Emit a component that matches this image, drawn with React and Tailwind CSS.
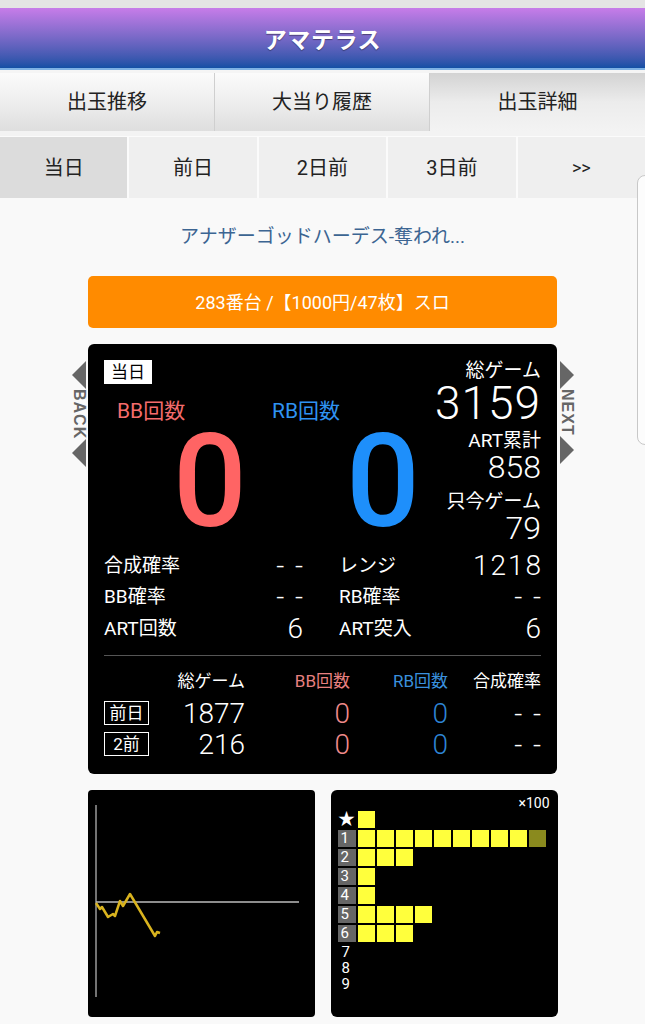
import React from 'react';

const seg = "font-['Roboto','Liberation_Sans',sans-serif]";

const histRows = [
  { label: '1', count: 9, dim: 1 },
  { label: '2', count: 3 },
  { label: '3', count: 1 },
  { label: '4', count: 1 },
  { label: '5', count: 4 },
  { label: '6', count: 3 },
];

const Cell = ({ dim }) => (
  <div className={`w-[17px] h-[17px] ${dim ? 'bg-[#8a8a1e]' : 'bg-[#ffff3c]'}`} />
);

const SideArrow = ({ dir, label }) => (
  <div className="flex flex-col items-center w-[14px] pt-[17px]">
    <div
      className={`w-0 h-0 border-y-[14px] border-y-transparent ${
        dir === 'left' ? 'border-r-[14px] border-r-[#666]' : 'border-l-[14px] border-l-[#666]'
      }`}
    />
    <div className="[writing-mode:vertical-rl] text-[16px] font-bold text-[#666] leading-[14px] tracking-[1px] py-[3px] font-['Liberation_Sans',sans-serif]">
      {label}
    </div>
    <div
      className={`w-0 h-0 border-y-[14px] border-y-transparent ${
        dir === 'left' ? 'border-r-[14px] border-r-[#666]' : 'border-l-[14px] border-l-[#666]'
      }`}
    />
  </div>
);

const StatRow = ({ l1, v1, l2, v2 }) => (
  <div className="grid grid-cols-[199px_202px] gap-x-[36px] h-[31.5px] items-center">
    <div className="flex justify-between items-center">
      <span className="text-[19px] leading-[26px]">{l1}</span>
      <span className={`${seg} font-light text-[28px] leading-[26px] tracking-[2px] -mr-[2px]`}>{v1}</span>
    </div>
    <div className="flex justify-between items-center">
      <span className="text-[19px] leading-[26px]">{l2}</span>
      <span className={`${seg} font-light text-[28px] leading-[26px] tracking-[2px] -mr-[2px]`}>{v2}</span>
    </div>
  </div>
);

const HistRow = ({ label, count, dim }) => (
  <div className="flex gap-[2px] items-center h-[17px]">
    <div className="w-[18px] h-[17px] bg-[#666] text-white text-[15px] leading-[17px] pl-[3px]">{label}</div>
    <div className="flex gap-[2px]">
      {Array.from({ length: count }).map((_, i) => (
        <Cell key={i} />
      ))}
      {dim ? <Cell dim /> : null}
    </div>
  </div>
);

export default function App() {
  return (
    <div className="relative min-h-[1024px] bg-[#f9f9f9] overflow-hidden font-['Roboto','Noto_Sans_CJK_JP',sans-serif] text-[#222]">
      {/* top strip */}
      <div className="h-2 bg-[#e4e4e4]" />

      {/* header */}
      <div className="h-[62px] bg-gradient-to-b from-[#c77ce9] to-[#1250a5] flex items-center justify-center border-b-2 border-[#7fb2e4]">
        <h1 className="text-white text-[23px] font-bold tracking-wide [text-shadow:0_1px_1px_rgba(0,0,0,0.4)] font-['Noto_Sans_CJK_JP',sans-serif]">
          アマテラス
        </h1>
      </div>

      {/* main tabs */}
      <div className="grid grid-cols-3 h-[61px] pt-[3px] bg-[#f5f5f5]">
        <div className="flex items-center justify-center bg-gradient-to-b from-[#fbfbfb] via-[#eeeeee] to-[#dedede] border-r border-[#cfcfcf] text-[20px]">
          出玉推移
        </div>
        <div className="flex items-center justify-center bg-gradient-to-b from-[#fbfbfb] via-[#eeeeee] to-[#dedede] border-r border-[#cfcfcf] text-[20px]">
          大当り履歴
        </div>
        <div className="flex items-center justify-center bg-gradient-to-b from-[#d3d3d3] via-[#ececec] to-[#f3f3f3] text-[20px]">
          出玉詳細
        </div>
      </div>
      <div className="h-[5px] bg-[#f3f3f3]" />

      {/* day tabs */}
      <div className="grid grid-cols-5 h-[62px] gap-[2px] bg-[#fbfbfb] pt-[1px]">
        <div className="flex items-center justify-center bg-[#dcdcdc] text-[20px]">当日</div>
        <div className="flex items-center justify-center bg-[#efefef] text-[20px]">前日</div>
        <div className="flex items-center justify-center bg-[#efefef] text-[20px]">2日前</div>
        <div className="flex items-center justify-center bg-[#efefef] text-[20px]">3日前</div>
        <div className="flex items-center justify-center bg-[#efefef] text-[18px]">&gt;&gt;</div>
      </div>

      {/* machine name */}
      <div className="text-center text-[#3c6592] text-[19px] mt-[25px] leading-[27px]">
        アナザーゴッドハーデス-奪われ...
      </div>

      {/* orange bar */}
      <div className="w-[469px] mx-auto mt-[26px] h-[52px] rounded-[5px] bg-[#ff8b00] flex items-center justify-center text-white text-[18px]">
        283番台 /【1000円/47枚】スロ
      </div>

      {/* data panel with back / next */}
      <div className="flex justify-center mt-[16px] pl-[1px]">
        <SideArrow dir="left" label="BACK" />
        <div className="w-[469px] h-[430px] ml-[2px] mr-[3px] bg-black rounded-[6px] text-white px-4 pt-4">
          <div className="flex justify-between h-[190px]">
            <div className="flex-1">
              <div className="w-[48px] h-[24px] bg-white text-black text-[17px] leading-[24px] text-center">当日</div>
              <div className="flex mt-[14px] text-[21px] leading-[26px]">
                <span className="ml-[13px] w-[155px] text-[#f46c6c]">BB回数</span>
                <span className="text-[#2f93f2]">RB回数</span>
              </div>
              <div className="flex mt-[8px] font-medium leading-[100px]">
                <span className={`${seg} ml-[69px] w-[173px] text-[130px] text-[#ff6464]`}>0</span>
                <span className={`${seg} text-[130px] text-[#1e8ffb]`}>0</span>
              </div>
            </div>
            <div className="flex flex-col items-end">
              <span className="text-[19px] leading-[22px]">総ゲーム</span>
              <span className={`${seg} font-light text-[46px] leading-[42px] tracking-[1px]`}>3159</span>
              <span className="text-[19px] leading-[22px] mt-[6px]">ART累計</span>
              <span className={`${seg} font-light text-[32px] leading-[30px]`}>858</span>
              <span className="text-[19px] leading-[22px] mt-[9px]">只今ゲーム</span>
              <span className={`${seg} font-light text-[32px] leading-[30px]`}>79</span>
            </div>
          </div>

          <StatRow l1="合成確率" v1="- -" l2="レンジ" v2="1218" />
          <StatRow l1="BB確率" v1="- -" l2="RB確率" v2="- -" />
          <StatRow l1="ART回数" v1="6" l2="ART突入" v2="6" />

          <div className="h-px bg-[#555] mt-[10px]" />

          <div className="grid grid-cols-[56px_85px_105px_98px_93px] text-right mt-[13px] items-center">
            <span />
            <span className="text-[17px] leading-[24px]">総ゲーム</span>
            <span className="text-[17px] leading-[24px] text-[#e88080]">BB回数</span>
            <span className="text-[17px] leading-[24px] text-[#3a90de]">RB回数</span>
            <span className="text-[17px] leading-[24px]">合成確率</span>

            <span className="text-left mt-[5px]">
              <span className="inline-block w-[45px] text-center border border-white text-[17px] leading-[22px]">前日</span>
            </span>
            <span className={`${seg} font-light text-[28px] leading-[31px] mt-[5px]`}>1877</span>
            <span className={`${seg} font-light text-[28px] leading-[31px] text-[#f08a8a] mt-[5px]`}>0</span>
            <span className={`${seg} font-light text-[28px] leading-[31px] text-[#2e84d4] mt-[5px]`}>0</span>
            <span className={`${seg} font-light text-[28px] leading-[31px] tracking-[2px] -mr-[2px] mt-[5px]`}>- -</span>

            <span className="text-left">
              <span className="inline-block w-[45px] text-center border border-white text-[17px] leading-[22px]">2前</span>
            </span>
            <span className={`${seg} font-light text-[28px] leading-[31px]`}>216</span>
            <span className={`${seg} font-light text-[28px] leading-[31px] text-[#f08a8a]`}>0</span>
            <span className={`${seg} font-light text-[28px] leading-[31px] text-[#2e84d4]`}>0</span>
            <span className={`${seg} font-light text-[28px] leading-[31px] tracking-[2px] -mr-[2px]`}>- -</span>
          </div>
        </div>
        <SideArrow dir="right" label="NEXT" />
      </div>

      {/* charts */}
      <div className="flex justify-center gap-4 mt-4">
        <div className="w-[227px] h-[227px] bg-black rounded-[4px]">
          <svg width="227" height="227" viewBox="0 0 227 227">
            <line x1="8" y1="15" x2="8" y2="207" stroke="#9a9a9a" strokeWidth="1.5" />
            <line x1="8" y1="112" x2="211" y2="112" stroke="#bdbdbd" strokeWidth="1.5" />
            <polyline
              points="8,113 12,119 14,117 20,127 25,124 27,126 32,111 35,116 42,104 45,109 67,146 69,142 72,143"
              fill="none"
              stroke="#d9b31e"
              strokeWidth="2.5"
              strokeLinejoin="round"
            />
          </svg>
        </div>
        <div className="w-[227px] h-[227px] bg-black rounded-[6px] px-[7px] pt-[4px] text-white">
          <div className="text-right text-[14px] leading-[18px] pr-[1px]">×100</div>
          <div className="flex flex-col gap-[2px] -mt-[1px]">
            <div className="flex gap-[2px] items-center h-[17px]">
              <div className="w-[18px] text-center text-[17px] leading-[17px]">★</div>
              <Cell />
            </div>
            {histRows.map((r) => (
              <HistRow key={r.label} {...r} />
            ))}
          </div>
          <div className="flex flex-col text-[15px] leading-[16px] pl-[4px] mt-[2px]">
            <span>7</span>
            <span>8</span>
            <span>9</span>
          </div>
        </div>
      </div>

      {/* overlapping side handle */}
      <div className="absolute right-[-10px] top-[175px] w-[18px] h-[270px] bg-[#fcfcfc] border border-[#c8c8c8] rounded-[8px]" />
    </div>
  );
}
